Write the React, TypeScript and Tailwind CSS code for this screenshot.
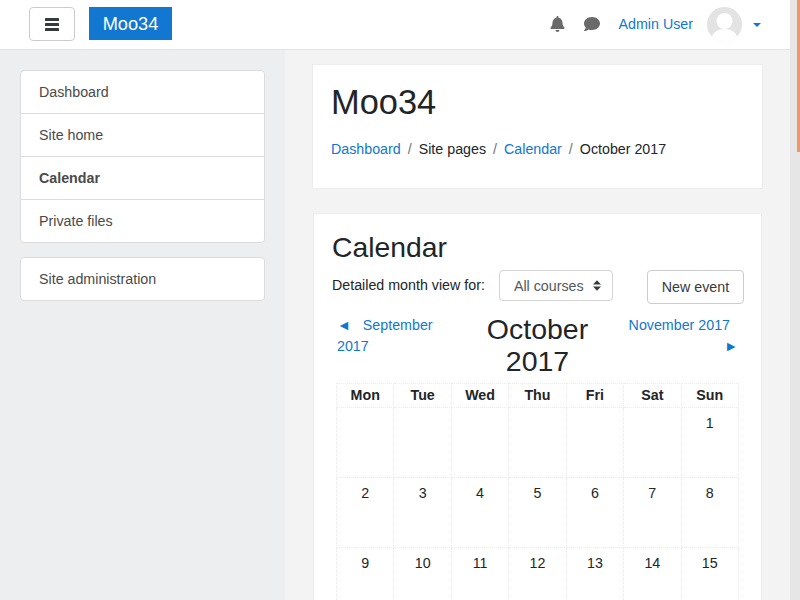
import { FaBell, FaComment } from "react-icons/fa";

const nav = ["Dashboard", "Site home", "Calendar", "Private files"];
const heads = ["Mon", "Tue", "Wed", "Thu", "Fri", "Sat", "Sun"];
const rows = [
  ["", "", "", "", "", "", "1"],
  ["2", "3", "4", "5", "6", "7", "8"],
  ["9", "10", "11", "12", "13", "14", "15"],
];

export default function App() {
  return (
    <div className="flex h-[600px] w-[800px] overflow-hidden font-['Liberation_Sans',Arial,sans-serif] text-[14.25px] text-[#212529]">
      <div className="flex w-[790px] flex-col">
        <header className="flex h-[50px] shrink-0 items-center border-b border-[#e3e3e3] bg-white pl-[29px] pr-[29px]">
          <button className="-mt-[1px] flex h-[34px] w-[46px] items-center justify-center rounded-[4px] border border-[#cccccc] bg-white">
            <svg width="14" height="13" viewBox="0 0 14 13" fill="#373a3c">
              <rect width="14" height="3" rx="0.5" />
              <rect y="5" width="14" height="3" rx="0.5" />
              <rect y="10" width="14" height="3" rx="0.5" />
            </svg>
          </button>
          <div className="-mt-[2px] ml-[14px] flex h-[33px] w-[83px] items-center justify-center bg-[#1177d1] pt-[2px] text-[18.2px] text-white">Moo34</div>
          <div className="ml-auto flex items-center">
            <FaBell className="-mt-[2px] h-[16px] w-[15px] text-[#6a6a6a]" />
            <FaComment className="-mt-[2px] ml-[19px] h-[16px] w-[16px] text-[#6a6a6a]" />
            <span className="ml-[19px] text-[#1177d1]">Admin User</span>
            <svg className="ml-[14px] h-[35px] w-[35px]" viewBox="0 0 35 35">
              <defs>
                <clipPath id="avatar-clip"><circle cx="17.5" cy="17.5" r="17.5" /></clipPath>
              </defs>
              <g clipPath="url(#avatar-clip)">
                <rect width="35" height="35" fill="#e3e3e3" />
                <circle cx="17.5" cy="14" r="8" fill="#ffffff" />
                <path d="M4 35c0-9 6-13 13.500-13S31 26 31 35z" fill="#ffffff" />
              </g>
            </svg>
            <span className="ml-[11px] mt-[1px] h-0 w-0 border-x-[4.500px] border-t-[4.500px] border-x-transparent border-t-[#1177d1]" />
          </div>
        </header>
        <div className="flex min-h-0 flex-1">
          <aside className="w-[285px] shrink-0 bg-[#eceef0] px-[20px] pt-[20px]">
            <div className="overflow-hidden rounded-[4px] border border-[#dcdcdc] bg-white">
              {nav.map((n, i) => (
                <div
                  key={n}
                  className={`flex items-center pl-[18px] pt-[2px] text-[#4a4a4a] ${i < 3 ? "h-[43px] border-b border-[#dcdcdc]" : "h-[42px]"} ${n === "Calendar" ? "font-bold" : ""}`}
                >
                  {n}
                </div>
              ))}
            </div>
            <div className="mt-[14px] flex h-[44px] items-center rounded-[4px] border border-[#dcdcdc] bg-white pl-[18px] pt-[2px] text-[#4a4a4a]">
              Site administration
            </div>
          </aside>
          <main className="min-w-0 flex-1 overflow-hidden bg-[#f3f3f3] pl-[27px] pr-[27px] pt-[15px]">
            <section className="-mt-[1px] h-[125px] border border-[#ececec] bg-white pl-[18px] pt-[16px]">
              <h1 className="text-[34.4px] leading-[43px]">Moo34</h1>
              <div className="mt-[14px] flex leading-[22px]">
                <span className="text-[#1177d1]">Dashboard</span>
                <span className="mx-[7px] text-[#6c757d]">/</span>
                <span>Site pages</span>
                <span className="mx-[7px] text-[#6c757d]">/</span>
                <span className="text-[#1177d1]">Calendar</span>
                <span className="mx-[7px] text-[#6c757d]">/</span>
                <span>October 2017</span>
              </div>
            </section>
            <section className="mx-[1px] mt-[24px] border border-[#ececec] bg-white pb-[20px] pl-[18px] pr-[17px] pt-[16px]">
              <h2 className="text-[28.3px] leading-[34px]">Calendar</h2>
              <div className="mt-[6px] flex items-start">
                <span className="mt-[4px] leading-[22px]">Detailed month view for:</span>
                <div className="ml-[14px] flex h-[31px] w-[114px] items-center justify-between rounded-[4px] border border-[#d4d4d4] pl-[14px] pr-[11px] pt-[2px] text-[#55595c]">
                  All courses
                  <svg width="8" height="11" viewBox="0 0 9 12" fill="#373a3c" className="-mt-[2px]"><path d="M4.500 0 9 4.800H0zM4.500 12 0 7.200h9z" /></svg>
                </div>
                <button className="ml-auto flex h-[34px] w-[97px] items-center justify-center rounded-[4px] border border-[#cccccc] bg-white pt-[2px] text-[#373a3c]">New event</button>
              </div>
              <div className="mt-[2px] flex items-start px-[5px]">
                <div className="mt-[9px] w-[120px] leading-[21px] text-[#1177d1]">
                  <span className="mr-[12px] text-[14px] leading-none">◄</span>September 2017
                </div>
                <div className="mt-[7px] w-[160px] pl-[1px] text-center text-[28.5px] leading-[32px]">October 2017</div>
                <div className="mt-[9px] w-[122px] text-right leading-[21px] text-[#1177d1]">
                  <div className="pr-[9px]">November 2017</div>
                  <div className="pr-[1px] text-[14px]">►</div>
                </div>
              </div>
              <table className="ml-[4px] mt-[6px] w-[403px] table-fixed border-collapse">
                <thead>
                  <tr>
                    {heads.map((h) => (
                      <th key={h} className="h-[24px] border border-dotted border-[#ebebeb] p-0 text-center align-middle font-bold">{h}</th>
                    ))}
                  </tr>
                </thead>
                <tbody>
                  {rows.map((r, i) => (
                    <tr key={i}>
                      {r.map((c, j) => (
                        <td key={j} className="h-[70px] border border-dotted border-[#ebebeb] p-0 pt-[4px] text-center align-top leading-[22px]">{c}</td>
                      ))}
                    </tr>
                  ))}
                </tbody>
              </table>
            </section>
          </main>
        </div>
      </div>
      <div className="relative h-full w-[10px] shrink-0 bg-[#e6e6e6]">
        <div className="absolute right-0 top-0 h-[152px] w-[3px] bg-[#f0956a]" />
      </div>
    </div>
  );
}
